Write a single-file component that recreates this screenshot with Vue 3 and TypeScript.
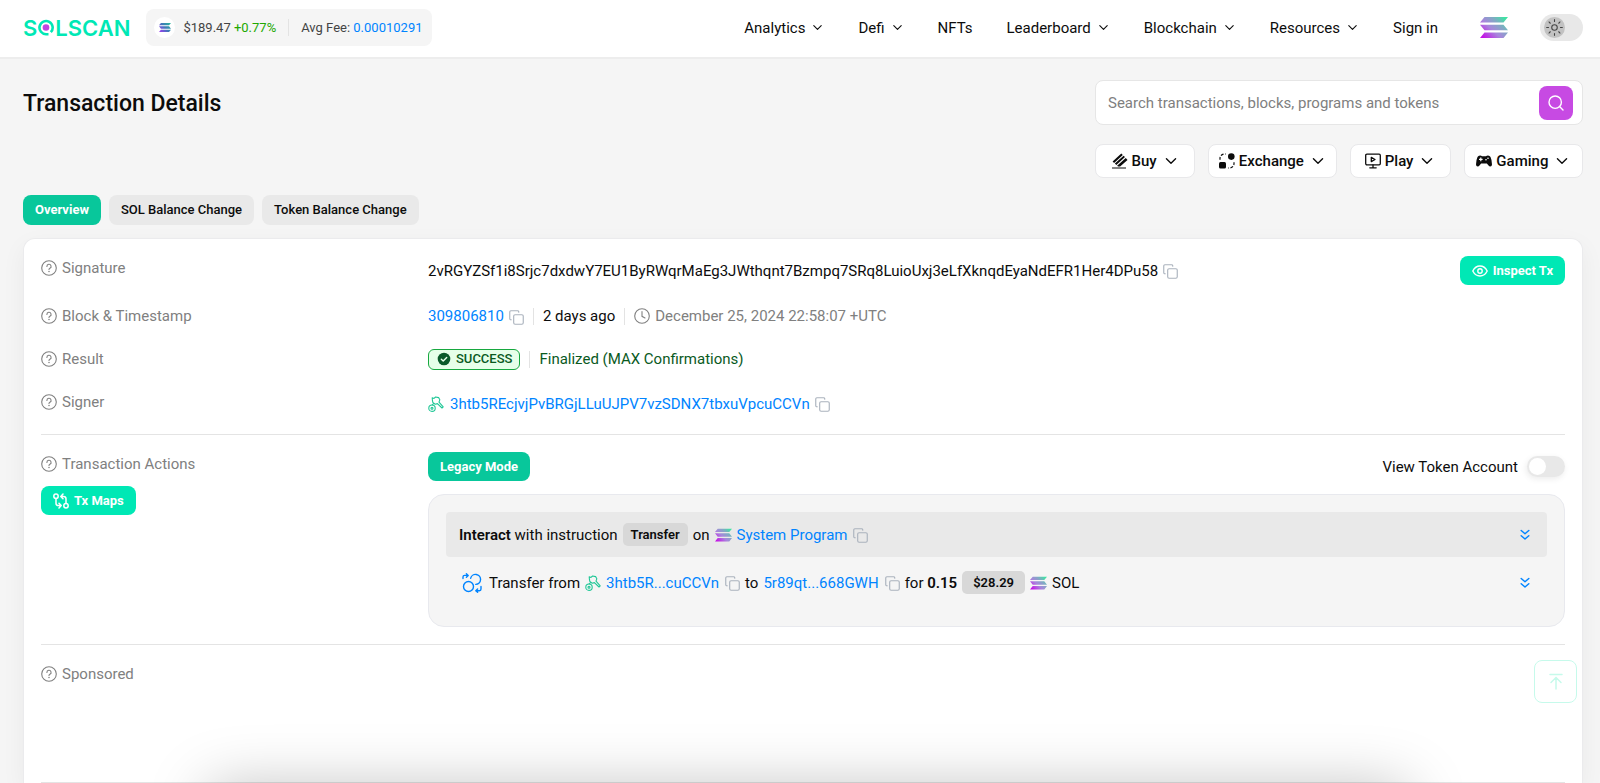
<script setup lang="ts">
import { ref } from 'vue'

interface NavItem { label: string; menu: boolean }
interface QuickLink { label: string; icon: string }

const nav: NavItem[] = [
  { label: 'Analytics', menu: true },
  { label: 'Defi', menu: true },
  { label: 'NFTs', menu: false },
  { label: 'Leaderboard', menu: true },
  { label: 'Blockchain', menu: true },
  { label: 'Resources', menu: true },
  { label: 'Sign in', menu: false },
]
const quick: QuickLink[] = [
  { label: 'Buy', icon: 'i-buy' },
  { label: 'Exchange', icon: 'i-exchange' },
  { label: 'Play', icon: 'i-play' },
  { label: 'Gaming', icon: 'i-gaming' },
]
const tabs: string[] = ['Overview', 'SOL Balance Change', 'Token Balance Change']
const activeTab = ref<string>('Overview')
const query = ref<string>('')
const dark = ref<boolean>(false)
const tokenAccount = ref<boolean>(false)
</script>

<template>
  <div class="page">
    <svg class="sprite" aria-hidden="true">
      <defs>
        <linearGradient id="solGrad" gradientUnits="userSpaceOnUse" x1="24" y1="0" x2="4" y2="21">
          <stop offset="0" stop-color="#3fe3a3" />
          <stop offset="0.3" stop-color="#82a9c4" />
          <stop offset="0.6" stop-color="#a885dc" />
          <stop offset="1" stop-color="#c413e6" />
        </linearGradient>
        <linearGradient id="solDark" gradientUnits="userSpaceOnUse" x1="27" y1="0" x2="2" y2="21">
          <stop offset="0" stop-color="#26b89a" />
          <stop offset="0.5" stop-color="#3f78b8" />
          <stop offset="1" stop-color="#9b3df0" />
        </linearGradient>
      </defs>
      <symbol id="i-sol" viewBox="0 0 28 21">
        <path fill="url(#solGrad)" d="M4.500 0H28l-4.500 5.400H0zM0 7.800h23.500l4.500 5.400H4.500zM4.500 15.600H28L23.500 21H0z" />
      </symbol>
      <symbol id="i-sol-dark" viewBox="0 0 28 21">
        <path fill="url(#solDark)" d="M4.500 0H28l-4.500 5.400H0zM0 7.800h23.500l4.500 5.400H4.500zM4.500 15.600H28L23.500 21H0z" />
      </symbol>
      <symbol id="i-chev" viewBox="0 0 14 14">
        <path d="M3 5l4 4 4-4" fill="none" stroke="currentColor" stroke-width="1.2" stroke-linecap="round" stroke-linejoin="round" />
      </symbol>
      <symbol id="i-help" viewBox="0 0 16 16">
        <g fill="none" stroke="currentColor" stroke-width="1.1" stroke-linecap="round">
          <circle cx="8" cy="8" r="7.3" />
          <path d="M5.9 6.4a2.1 2.1 0 1 1 3 1.9c-.6.3-.9.6-.9 1.2" />
        </g>
        <circle cx="8" cy="11.4" r=".75" fill="currentColor" />
      </symbol>
      <symbol id="i-copy" viewBox="0 0 16 16">
        <g fill="none" stroke="currentColor" stroke-width="1.2" stroke-linecap="round" stroke-linejoin="round">
          <rect x="5" y="5" width="10.2" height="10.2" rx="1.5" />
          <path d="M2.4 10.4H2A1.3 1.3 0 0 1 .8 9V2A1.3 1.3 0 0 1 2 .8h7A1.3 1.3 0 0 1 10.400 2v.4" />
        </g>
      </symbol>
      <symbol id="i-clock" viewBox="0 0 16 16">
        <g fill="none" stroke="currentColor" stroke-width="1.1" stroke-linecap="round">
          <circle cx="8" cy="8" r="7.3" />
          <path d="M8 3.500V8.300l3 1.600" />
        </g>
      </symbol>
      <symbol id="i-check" viewBox="0 0 14 14">
        <circle cx="7" cy="7" r="6.300" fill="#0a5a2a" />
        <path d="M4.300 7.200l1.900 1.800 3.500-3.600" fill="none" stroke="#e6ffe9" stroke-width="1.400" stroke-linecap="round" stroke-linejoin="round" />
      </symbol>
      <symbol id="i-key" viewBox="0 0 16 16">
        <g fill="none" stroke="#1fc796" stroke-width="1.100" stroke-linejoin="round" stroke-linecap="round">
          <circle cx="4" cy="12.200" r="3.200" />
          <circle cx="4" cy="12.200" r="1" />
          <path d="M4.200 1.800L6 2.400 7.600 1l3 .6 1.200 2.200-.8 2.400 4.200 4.600-1.200 1.200-4.600-4.400-2.200.6L4.800 6.400 4.400 4.200zM5.200 7.800L4.200 8.800" />
        </g>
      </symbol>
      <symbol id="i-eye" viewBox="0 0 16 12">
        <g fill="none" stroke="currentColor" stroke-width="1.400">
          <path d="M.8 6C2.400 2.800 5 1 8 1s5.600 1.800 7.200 5C13.600 9.200 11 11 8 11S2.400 9.200.8 6z" />
          <circle cx="8" cy="6" r="2.200" />
        </g>
      </symbol>
      <symbol id="i-maps" viewBox="0 0 16 16">
        <g fill="none" stroke="currentColor" stroke-width="1.500" stroke-linecap="round" stroke-linejoin="round">
          <circle cx="3" cy="3.200" r="2.200" />
          <circle cx="13" cy="12.800" r="2.200" />
          <path d="M3 5.400v4.800q0 2.400 2.400 2.400h2.400M6 10.200l2.200 2.400L6 15M13 10.600V5.800q0-2.400-2.400-2.400H8.200M10 1L7.800 3.400 10 5.800" />
        </g>
      </symbol>
      <symbol id="i-swap" viewBox="0 0 20 20">
        <g fill="none" stroke="currentColor" stroke-width="1.400" stroke-linecap="round" stroke-linejoin="round">
          <circle cx="6.500" cy="13.500" r="5" />
          <path d="M8.700 5.200a5 5 0 1 1 5.100 6.200M1 5.500V4q0-1.600 1.600-1.600H6M4.400.8L6.200 2.400 4.400 4.200M19 13.500v2.600q0 1.600-1.600 1.600H14M15.600 15.900L13.800 17.700l1.800 1.600" />
        </g>
      </symbol>
      <symbol id="i-down2" viewBox="0 0 10 12">
        <path d="M1.200 1.500L5 4.700l3.800-3.200M1.200 6.800L5 10l3.800-3.200" fill="none" stroke="currentColor" stroke-width="1.500" stroke-linecap="round" stroke-linejoin="round" />
      </symbol>
      <symbol id="i-search" viewBox="0 0 16 16">
        <g fill="none" stroke="currentColor" stroke-width="1.400" stroke-linecap="round">
          <circle cx="7.200" cy="7.200" r="6.200" />
          <path d="M11.800 11.800l3.200 3.200" />
        </g>
      </symbol>
      <symbol id="i-sun" viewBox="0 0 16 16">
        <g fill="none" stroke="#444" stroke-width="1" stroke-linecap="round">
          <circle cx="8" cy="8" r="2.600" />
          <path d="M8 .6v1.800M8 13.600v1.800M.6 8h1.800M13.600 8h1.800M2.800 2.800L4 4M12 12l1.200 1.200M2.800 13.200L4 12M12 4l1.200-1.200" />
        </g>
      </symbol>
      <symbol id="i-top" viewBox="0 0 14 18">
        <path d="M1 1.500h12M7 16V5M2 9.500L7 4.500l5 5" fill="none" stroke="currentColor" stroke-width="1.500" stroke-linecap="round" />
      </symbol>
      <symbol id="i-buy" viewBox="0 0 16 16">
        <path fill="currentColor" d="M9.300.5L.6 8.400l1.500 1.500L10.800 2zM11.600 2.700L2.900 10.600l1.400 1.400L13 4.100zM13.800 4.900L5.100 12.800l1 .8h2L15.500 6.900zM0 14.600h14v1H0z" />
      </symbol>
      <symbol id="i-exchange" viewBox="0 0 16 16">
        <circle cx="12.300" cy="3.600" r="3.300" fill="currentColor" />
        <rect x="0" y="9" width="7" height="6.500" rx="1.500" fill="currentColor" />
        <path d="M1 6.800V5.400A4.400 4.400 0 0 1 5.400 1H6.800M15 9.200v1.400a4.400 4.400 0 0 1-4.400 4.400H9.200" fill="none" stroke="currentColor" stroke-width="1.200" stroke-dasharray="2.800 1.600" />
      </symbol>
      <symbol id="i-play" viewBox="0 0 16 16">
        <g fill="none" stroke="currentColor" stroke-width="1.300" stroke-linecap="round" stroke-linejoin="round">
          <rect x=".7" y="1.200" width="14.600" height="10.600" rx="1.200" />
          <path d="M6.300 4.400v4.200l3.700-2.100zM8 12v2.600M4.800 14.800h6.400" />
        </g>
      </symbol>
      <symbol id="i-gaming" viewBox="0 0 16 16">
        <path fill="currentColor" fill-rule="evenodd" d="M4 2.400q1.400 0 2 .8h4q.6-.8 2-.8 1.800 0 2.500 1.500Q16 7 16 11.600q-.1 2-1.700 2-1 0-2-1.300L10.900 10.500H5.100L3.700 12.300q-1 1.300-2 1.300-1.600 0-1.700-2Q0 7 1.500 3.900 2.200 2.400 4 2.400zM4.200 4.600v1.200H3v1.200h1.200v1.200h1.200V7h1.200V5.800H5.400V4.600zM10 6a.8.8 0 1 0 0 1.600.8.8 0 1 0 0-1.600zm2-1.600a.8.8 0 1 0 0 1.600.8.8 0 1 0 0-1.600z" />
      </symbol>
    </svg>

    <header class="topbar">
      <a class="logo" href="#" aria-label="Solscan home">
        <span>S</span>
        <svg width="16" height="17" viewBox="0 0 16 17" aria-hidden="true">
          <path d="M12.800 13.200A6.600 6.600 0 1 0 8.300 15.200h2.200" fill="none" stroke="#00e8b5" stroke-width="2.600" />
          <circle cx="8" cy="8.500" r="3.300" fill="#c044e0" />
        </svg>
        <span>LSCAN</span>
      </a>
      <div class="stats">
        <span class="coin"><svg width="12" height="11"><use href="#i-sol-dark" /></svg></span>
        <span>$189.47 <span class="up">+0.77%</span></span>
        <i class="bar"></i>
        <span>Avg Fee: <a href="#">0.00010291</a></span>
      </div>
      <nav class="nav">
        <a v-for="n in nav" :key="n.label" href="#">
          {{ n.label }}
          <svg v-if="n.menu" width="13" height="13"><use href="#i-chev" /></svg>
        </a>
      </nav>
      <svg class="chain" width="28" height="21"><use href="#i-sol" /></svg>
      <label class="theme">
        <input v-model="dark" type="checkbox" aria-label="Dark theme" />
        <span class="knob"><svg width="17" height="17"><use href="#i-sun" /></svg></span>
      </label>
    </header>

    <main class="main">
      <div class="head">
        <h1>Transaction Details</h1>
        <div class="tools">
          <form class="search" @submit.prevent>
            <input v-model="query" type="text" aria-label="Search" placeholder="Search transactions, blocks, programs and tokens" />
            <button type="submit" aria-label="Search"><svg width="16" height="16"><use href="#i-search" /></svg></button>
          </form>
          <div class="quick">
            <button v-for="q in quick" :key="q.label" type="button">
              <svg width="16" height="16"><use :href="'#' + q.icon" /></svg>
              {{ q.label }}
              <svg class="chev" width="16" height="16"><use href="#i-chev" /></svg>
            </button>
          </div>
        </div>
      </div>

      <div class="tabs">
        <button v-for="t in tabs" :key="t" type="button" :class="{ on: t === activeTab }" @click="activeTab = t">{{ t }}</button>
      </div>

      <div class="card">
        <section class="group">
          <div class="row">
            <div class="label"><svg width="16" height="16"><use href="#i-help" /></svg>Signature</div>
            <div class="value">
              <span>2vRGYZSf1i8Srjc7dxdwY7EU1ByRWqrMaEg3JWthqnt7Bzmpq7SRq8LuioUxj3eLfXknqdEyaNdEFR1Her4DPu58</span>
              <button class="copy" type="button" aria-label="Copy"><svg width="15" height="15"><use href="#i-copy" /></svg></button>
              <button class="btn bright end" type="button"><svg width="16" height="12"><use href="#i-eye" /></svg>Inspect Tx</button>
            </div>
          </div>
          <div class="row">
            <div class="label"><svg width="16" height="16"><use href="#i-help" /></svg>Block &amp; Timestamp</div>
            <div class="value">
              <a href="#">309806810</a>
              <button class="copy" type="button" aria-label="Copy"><svg width="15" height="15"><use href="#i-copy" /></svg></button>
              <i class="bar wide"></i>
              <span>2 days ago</span>
              <i class="bar wide"></i>
              <span class="muted"><svg width="16" height="16"><use href="#i-clock" /></svg>December 25, 2024 22:58:07 +UTC</span>
            </div>
          </div>
          <div class="row">
            <div class="label"><svg width="16" height="16"><use href="#i-help" /></svg>Result</div>
            <div class="value">
              <span class="success"><svg width="14" height="14"><use href="#i-check" /></svg>SUCCESS</span>
              <i class="bar wide"></i>
              <span class="final">Finalized (MAX Confirmations)</span>
            </div>
          </div>
          <div class="row">
            <div class="label"><svg width="16" height="16"><use href="#i-help" /></svg>Signer</div>
            <div class="value low">
              <svg class="key" width="16" height="16"><use href="#i-key" /></svg>
              <a href="#">3htb5REcjvjPvBRGjLLuUJPV7vzSDNX7tbxuVpcuCCVn</a>
              <button class="copy" type="button" aria-label="Copy"><svg width="15" height="15"><use href="#i-copy" /></svg></button>
            </div>
          </div>
        </section>

        <section class="group">
          <div class="row">
            <div>
              <div class="label"><svg width="16" height="16"><use href="#i-help" /></svg>Transaction Actions</div>
              <button class="btn bright maps" type="button"><svg width="16" height="16"><use href="#i-maps" /></svg>Tx Maps</button>
            </div>
            <div>
              <div class="value">
                <button class="btn" type="button">Legacy Mode</button>
                <label class="end account">
                  View Token Account
                  <input v-model="tokenAccount" type="checkbox" role="switch" />
                </label>
              </div>
              <div class="actions">
                <div class="act shade">
                  <span><b>Interact</b> with instruction</span>
                  <span class="chip">Transfer</span>
                  <span>on</span>
                  <svg width="17" height="14"><use href="#i-sol" /></svg>
                  <a href="#">System Program</a>
                  <button class="copy" type="button" aria-label="Copy"><svg width="15" height="15"><use href="#i-copy" /></svg></button>
                  <button class="more" type="button" aria-label="Expand"><svg width="10" height="12"><use href="#i-down2" /></svg></button>
                </div>
                <div class="act">
                  <svg class="swap" width="20" height="20"><use href="#i-swap" /></svg>
                  <span>Transfer from</span>
                  <svg class="key" width="16" height="16"><use href="#i-key" /></svg>
                  <a href="#">3htb5R...cuCCVn</a>
                  <button class="copy" type="button" aria-label="Copy"><svg width="15" height="15"><use href="#i-copy" /></svg></button>
                  <span>to</span>
                  <a href="#">5r89qt...668GWH</a>
                  <button class="copy" type="button" aria-label="Copy"><svg width="15" height="15"><use href="#i-copy" /></svg></button>
                  <span>for <b>0.15</b></span>
                  <span class="chip price">$28.29</span>
                  <svg width="17" height="14"><use href="#i-sol" /></svg>
                  <span>SOL</span>
                  <button class="more" type="button" aria-label="Expand"><svg width="10" height="12"><use href="#i-down2" /></svg></button>
                </div>
              </div>
            </div>
          </div>
        </section>

        <section class="group last">
          <div class="label"><svg width="16" height="16"><use href="#i-help" /></svg>Sponsored</div>
        </section>
      </div>
    </main>

    <button class="totop" type="button" aria-label="Back to top"><svg width="14" height="18"><use href="#i-top" /></svg></button>
    <div class="sheet"></div>
  </div>
</template>

<style>
body { background: #f5f5f5; }
</style>

<style scoped>
* { box-sizing: border-box; }
.page {
  min-height: 100vh;
  display: flex;
  flex-direction: column;
  font: 15px/24px Roboto, "Liberation Sans", sans-serif;
  color: #0c0c0c;
}
.sprite { position: absolute; width: 0; height: 0; }
svg { flex: none; display: block; }
a { color: #0084ff; text-decoration: none; }
button { font: inherit; color: inherit; border: 0; padding: 0; background: none; cursor: pointer; }
b { font-weight: 600; }

.topbar {
  display: flex;
  align-items: center;
  height: 59px;
  padding: 0 17px 2px 23px;
  background: #fff;
  border-bottom: 2px solid #ededed;
}
.logo { display: flex; align-items: center; gap: 1px; font: 600 22px/24px Inter, sans-serif; color: #00e8b5; }
.stats {
  display: flex;
  align-items: center;
  height: 37px;
  margin-left: 16px;
  padding: 0 9px 0 8px;
  border-radius: 8px;
  background: #f5f5f5;
  font-size: 13px;
  color: #444;
}
.coin { display: grid; place-items: center; width: 21px; height: 21px; margin-right: 8px; border-radius: 50%; background: #fff; }
.up { color: #22a800; }
.bar { width: 1px; height: 17px; margin: 0 12px; background: #e3e3e3; }
.nav { display: flex; gap: 34px; margin-left: auto; }
.nav a { display: flex; align-items: center; gap: 6px; color: #0c0c0c; }
.chain { margin-left: 42px; }
.theme { position: relative; display: block; width: 43px; height: 27px; margin-left: 32px; border-radius: 14px; background: #e8e8e8; }
.theme input { position: absolute; inset: 0; width: 100%; height: 100%; margin: 0; opacity: 0; }
.knob { position: absolute; left: 4px; top: 3px; display: grid; place-items: center; width: 21px; height: 21px; border-radius: 50%; background: #c2c2c2; }

.main { flex: 1; display: flex; flex-direction: column; padding: 21px 17px 0 23px; }
.head { display: flex; justify-content: space-between; }
h1 { margin: 8px 0 0; font-size: 23px; line-height: 32px; font-weight: 500; }
.tools { width: 488px; }
.search {
  display: flex;
  align-items: center;
  height: 45px;
  padding: 0 9px 0 12px;
  border: 1px solid #e6e6e6;
  border-radius: 8px;
  background: #fff;
}
.search input { flex: 1; min-width: 0; border: 0; padding: 0; outline: 0; font: inherit; background: none; }
.search input::placeholder { color: #808080; opacity: 1; }
.search button { display: grid; place-items: center; width: 34px; height: 34px; border-radius: 8px; background: #c74ae3; color: #fff; }
.quick { display: grid; grid-template-columns: 100fr 128fr 101fr 119fr; gap: 13px; margin-top: 19px; }
.quick button {
  display: flex;
  align-items: center;
  justify-content: center;
  gap: 4px;
  height: 34px;
  border: 1px solid #e8e8ea;
  border-radius: 8px;
  background: #fff;
  font-weight: 500;
}
.chev { margin-left: 2px; }

.tabs { display: flex; gap: 8px; margin-top: 17px; }
.tabs button { height: 30px; padding: 0 12px; border-radius: 8px; background: #e9e9e9; font-size: 13px; font-weight: 500; }
.tabs .on { background: #08c79b; color: #fff; font-weight: 700; }

.card {
  flex: 1;
  display: flex;
  flex-direction: column;
  margin-top: 13px;
  padding: 0 17px;
  border: 1px solid #ebebed;
  border-bottom: 0;
  border-radius: 12px 12px 0 0;
  background: #fff;
  box-shadow: 0 8px 24px rgba(0, 0, 0, .05);
}
.group { display: flex; flex-direction: column; gap: 19px; padding: 17px 0; border-bottom: 1px solid #e4e4e4; }
.group.last { flex: 1; }
.row { display: grid; grid-template-columns: minmax(0, 1fr) minmax(0, 3fr); gap: 8px; }
.label { display: flex; align-items: center; gap: 5px; height: 24px; color: #808080; }
.value { display: flex; align-items: center; }
.low { height: 27px; }
.end { margin-left: auto; }
.copy { margin: 2px 0 0 5px; color: #aab2bd; }
.wide { margin: 0 9px; }
.muted { display: flex; align-items: center; gap: 5px; color: #808080; }
.success {
  display: flex;
  align-items: center;
  gap: 5px;
  height: 21px;
  padding: 0 7px 0 8px;
  border: 1px solid #17a83f;
  border-radius: 6px;
  background: #e6ffe9;
  color: #0a5a1e;
  font-size: 13px;
  font-weight: 500;
}
.final { color: #0a5a1e; }
.key { margin-right: 6px; }
.btn {
  display: flex;
  align-items: center;
  gap: 5px;
  height: 29px;
  padding: 0 12px;
  border-radius: 8px;
  background: #08c79b;
  color: #fff;
  font-size: 13px;
  font-weight: 700;
}
.bright { background: #00e8b5; }
.maps { margin-top: 10px; }
.account { display: flex; align-items: center; gap: 9px; }
.account input {
  appearance: none;
  position: relative;
  width: 38px;
  height: 21px;
  margin: 0;
  border-radius: 11px;
  background: #e8e8e8;
  box-shadow: -1px 2px 6px rgba(0, 0, 0, .08);
}
.account input::before { content: ""; position: absolute; left: 2px; top: 2px; width: 17px; height: 17px; border-radius: 50%; background: #fff; }
.actions { margin-top: 13px; padding: 17px 17px 18px; border: 1px solid #e8e9ee; border-radius: 16px; background: #f5f5f5; }
.act { display: flex; align-items: center; gap: 5px; height: 51px; padding: 0 17px 0 13px; }
.shade { height: 45px; border-radius: 4px; background: #e9e9e9; }
.act .copy { margin-left: 1px; }
.act .key { margin-right: 0; }
.chip { height: 23px; padding: 0 8px; border-radius: 5px; background: #d8d8d8; font-size: 13px; line-height: 23px; font-weight: 600; }
.price { padding: 0 11px; }
.swap { margin: 0 2px 0 3px; color: #0084ff; }
.more { margin-left: auto; color: #0084ff; }

.totop {
  position: fixed;
  right: 23px;
  bottom: 80px;
  display: grid;
  place-items: center;
  width: 43px;
  height: 43px;
  border: 1px solid #c6faeb;
  border-radius: 8px;
  background: #fff;
  color: #c6faeb;
}
.sheet { position: fixed; left: 13%; right: 12%; bottom: -64px; height: 60px; border-radius: 12px; box-shadow: 0 0 60px rgba(0, 0, 0, .25); pointer-events: none; }
</style>
